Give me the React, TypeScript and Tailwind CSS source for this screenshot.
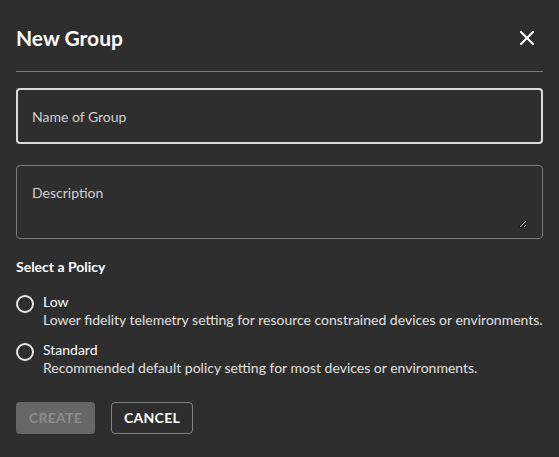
import { useState } from "react";

const policies = [
  {
    id: "low",
    name: "Low",
    text: "Lower fidelity telemetry setting for resource constrained devices or environments.",
  },
  {
    id: "standard",
    name: "Standard",
    text: "Recommended default policy setting for most devices or environments.",
  },
];

const App = () => {
  const [policy, setPolicy] = useState("");

  return (
    <div className="w-[559px] h-[457px] bg-[#2e2e2e] text-[#e6e6e6] px-4 font-['Lato','Noto_Sans',sans-serif]">
      {/* Header */}
      <div className="pt-6 flex items-center justify-between h-[52px]">
        <h2 className="text-[21px] leading-[28px] font-bold text-white">New Group</h2>
        <button className="mr-[9px] text-white" aria-label="Close">
          <svg width="14" height="14" viewBox="0 0 14 14" fill="none">
            <path d="M1 1L13 13M13 1L1 13" stroke="currentColor" strokeWidth="2" strokeLinecap="square" />
          </svg>
        </button>
      </div>
      <div className="mt-[19px] h-px bg-[#7a7a7a]" />

      {/* Fields */}
      <input
        className="mt-4 block w-full h-[56px] rounded-[4px] border-2 border-[#dcdcdc] bg-transparent px-[14px] text-sm text-[#e6e6e6] placeholder:text-[#d0d0d0] outline-none"
        placeholder="Name of Group"
      />
      <div className="mt-[21px] h-[74px] rounded-[4px] border border-[#7a7a7a] pl-[15px] pr-[15px] pt-[17px] pb-[10px]">
        <textarea
          className="block w-full h-full bg-transparent text-sm leading-5 text-[#e6e6e6] placeholder:text-[#d0d0d0] outline-none [color-scheme:dark]"
          placeholder="Description"
        />
      </div>

      {/* Policy */}
      <div className="mt-[18px] text-sm leading-5 font-bold text-white">Select a Policy</div>
      <div className="mt-4 flex flex-col gap-[12px]">
        {policies.map((p) => (
          <label key={p.id} className="flex items-start cursor-pointer" onClick={() => setPolicy(p.id)}>
            <span className="mt-[2px] w-[18px] h-[18px] rounded-full border-2 border-[#e6e6e6] flex items-center justify-center shrink-0">
              {policy === p.id && <span className="w-[8px] h-[8px] rounded-full bg-[#e6e6e6]" />}
            </span>
            <span className="ml-[9px] text-sm leading-[18px]">
              <span className="block text-white">{p.name}</span>
              <span className="block text-[#e0e0e0]">{p.text}</span>
            </span>
          </label>
        ))}
      </div>

      {/* Actions */}
      <div className="mt-[25px] flex gap-4">
        <button
          disabled
          className="h-8 w-[79px] rounded-[4px] bg-[#666666] text-sm font-bold tracking-[0.3px] text-[#8c8c8c]"
        >
          CREATE
        </button>
        <button className="h-8 w-[82px] rounded-[4px] border border-[#808080] text-sm font-bold tracking-[0.3px] text-white">
          CANCEL
        </button>
      </div>
    </div>
  );
};

export default App;
